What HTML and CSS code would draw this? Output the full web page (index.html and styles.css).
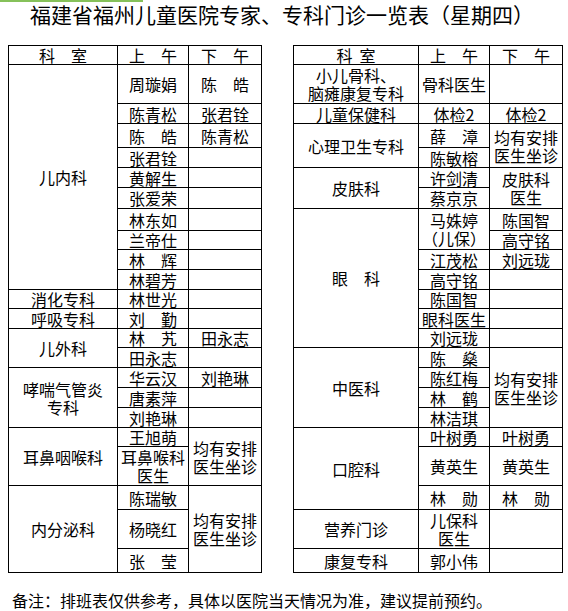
FILE: index.html
```html
<!DOCTYPE html>
<html lang="zh-CN">
<head>
<meta charset="utf-8">
<title>福建省福州儿童医院专家、专科门诊一览表（星期四）</title>
<link rel="stylesheet" href="styles.css">
</head>
<body>
<div class="topline"></div>
<h1 class="title">福建省福州儿童医院专家、专科门诊一览表（星期四）</h1>
<div class="tables">
  <table class="sched sched-left">
    <colgroup><col class="c-dept-l"><col class="c-am"><col class="c-pm"></colgroup>
    <tr class="h19"><td>科　室</td><td>上　午</td><td>下　午</td></tr>
    <tr class="h39"><td rowspan="10">儿内科</td><td>周璇娟</td><td>陈　皓</td></tr>
    <tr class="h20"><td>陈青松</td><td>张君铨</td></tr>
    <tr class="h24"><td>陈　皓</td><td>陈青松</td></tr>
    <tr class="h20"><td>张君铨</td><td></td></tr>
    <tr class="h20"><td>黄解生</td><td></td></tr>
    <tr class="h21"><td>张爱荣</td><td></td></tr>
    <tr class="h22"><td>林东如</td><td></td></tr>
    <tr class="h19"><td>兰帝仕</td><td></td></tr>
    <tr class="h20"><td>林　辉</td><td></td></tr>
    <tr class="h20"><td>林碧芳</td><td></td></tr>
    <tr class="h19"><td>消化专科</td><td>林世光</td><td></td></tr>
    <tr class="h20"><td>呼吸专科</td><td>刘　勤</td><td></td></tr>
    <tr class="h19"><td rowspan="2">儿外科</td><td>林　艽</td><td>田永志</td></tr>
    <tr class="h20"><td>田永志</td><td></td></tr>
    <tr class="h20"><td rowspan="3">哮喘气管炎<br>专科</td><td>华云汉</td><td>刘艳琳</td></tr>
    <tr class="h20"><td>唐素萍</td><td></td></tr>
    <tr class="h20"><td>刘艳琳</td><td></td></tr>
    <tr class="h19"><td rowspan="2">耳鼻咽喉科</td><td>王旭萌</td><td rowspan="2">均有安排医生坐诊</td></tr>
    <tr class="h39"><td>耳鼻喉科医生</td></tr>
    <tr class="h24"><td rowspan="3">内分泌科</td><td>陈瑞敏</td><td rowspan="3">均有安排医生坐诊</td></tr>
    <tr class="h39"><td>杨晓红</td></tr>
    <tr class="h24"><td>张　莹</td></tr>
  </table>
  <table class="sched sched-right">
    <colgroup><col class="c-dept-r"><col class="c-am"><col class="c-pm"></colgroup>
    <tr class="h19"><td>科&nbsp;&nbsp;室</td><td>上　午</td><td>下　午</td></tr>
    <tr class="h39"><td>小儿骨科、<br>脑瘫康复专科</td><td>骨科医生</td><td></td></tr>
    <tr class="h20"><td>儿童保健科</td><td>体检2</td><td>体检2</td></tr>
    <tr class="h24"><td rowspan="2">心理卫生专科</td><td>薛　漳</td><td rowspan="2">均有安排医生坐诊</td></tr>
    <tr class="h20"><td>陈敏榕</td></tr>
    <tr class="h20"><td rowspan="2">皮肤科</td><td>许剑清</td><td rowspan="2">皮肤科<br>医生</td></tr>
    <tr class="h21"><td>蔡京京</td></tr>
    <tr class="h22"><td rowspan="7">眼　科</td><td rowspan="2">马姝婷<br>（儿保）</td><td>陈国智</td></tr>
    <tr class="h19"><td>高守铭</td></tr>
    <tr class="h20"><td>江茂松</td><td>刘远珑</td></tr>
    <tr class="h20"><td>高守铭</td><td></td></tr>
    <tr class="h19"><td>陈国智</td><td></td></tr>
    <tr class="h20"><td>眼科医生</td><td></td></tr>
    <tr class="h19"><td>刘远珑</td><td></td></tr>
    <tr class="h20"><td rowspan="4">中医科</td><td>陈　燊</td><td rowspan="4">均有安排医生坐诊</td></tr>
    <tr class="h20"><td>陈红梅</td></tr>
    <tr class="h20"><td>林　鹤</td></tr>
    <tr class="h20"><td>林洁琪</td></tr>
    <tr class="h19"><td rowspan="3">口腔科</td><td>叶树勇</td><td>叶树勇</td></tr>
    <tr class="h39"><td>黄英生</td><td>黄英生</td></tr>
    <tr class="h24"><td>林　勋</td><td>林　勋</td></tr>
    <tr class="h39"><td>营养门诊</td><td>儿保科<br>医生</td><td></td></tr>
    <tr class="h24"><td>康复专科</td><td>郭小伟</td><td></td></tr>
  </table>
</div>
<p class="note">备注：排班表仅供参考，具体以医院当天情况为准，建议提前预约。</p>
</body>
</html>
```

FILE: styles.css
```css
html, body {
  margin: 0;
  padding: 0;
  background: #ffffff;
}

body {
  font-family: "Noto Sans CJK SC", "Noto Sans", sans-serif;
  color: #000000;
}

.topline {
  width: 143px;
  height: 2px;
  background: #86c15a;
}

.title {
  margin: 0;
  padding-left: 30px;
  font-size: 21px;
  line-height: 24px;
  font-weight: normal;
  white-space: nowrap;
}

.tables {
  display: flex;
  align-items: flex-start;
  gap: 31px;
  margin-top: 19px;
  padding-left: 8px;
}

.sched {
  border-collapse: collapse;
  table-layout: fixed;
}

.sched-left {
  width: 253px;
}

.sched-right {
  width: 269px;
}

.c-dept-l { width: 109px; }
.c-dept-r { width: 125px; }
.c-am { width: 71px; }
.c-pm { width: 73px; }

.sched td {
  border: 1px solid #000000;
  padding: 0;
  text-align: center;
  vertical-align: middle;
  font-size: 16px;
  line-height: 18px;
  white-space: normal;
}

.h19 { height: 19px; }
.h20 { height: 20px; }
.h21 { height: 21px; }
.h22 { height: 22px; }
.h24 { height: 24px; }
.h39 { height: 39px; }

.note {
  margin: 17px 0 0;
  padding-left: 12px;
  font-size: 16px;
  line-height: 20px;
  white-space: nowrap;
}
```
